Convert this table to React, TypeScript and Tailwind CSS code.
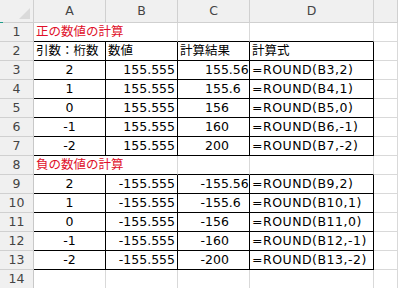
import React from 'react'

type Row = { a: string; b: string; c: string; d: string }

const positive: Row[] = [
  { a: '2', b: '155.555', c: '155.56', d: '=ROUND(B3,2)' },
  { a: '1', b: '155.555', c: '155.6', d: '=ROUND(B4,1)' },
  { a: '0', b: '155.555', c: '156', d: '=ROUND(B5,0)' },
  { a: '-1', b: '155.555', c: '160', d: '=ROUND(B6,-1)' },
  { a: '-2', b: '155.555', c: '200', d: '=ROUND(B7,-2)' },
]

const negative: Row[] = [
  { a: '2', b: '-155.555', c: '-155.56', d: '=ROUND(B9,2)' },
  { a: '1', b: '-155.555', c: '-155.6', d: '=ROUND(B10,1)' },
  { a: '0', b: '-155.555', c: '-156', d: '=ROUND(B11,0)' },
  { a: '-1', b: '-155.555', c: '-160', d: '=ROUND(B12,-1)' },
  { a: '-2', b: '-155.555', c: '-200', d: '=ROUND(B13,-2)' },
]

const grid = 'border-r border-b border-[#d9d9d9]'
const boxed = 'border-r border-b border-black'
const head = 'flex items-center justify-center bg-[#f0f0f0] border-r border-b border-[#d0d0d0] text-[#444]'

function RowNum({ n }: { n: number }) {
  return <div className={`${head} border-r-[#c8c8c8]`}>{n}</div>
}

// result column: integer part lines up, minus hangs to the left
function Result({ value }: { value: string }) {
  const neg = value.startsWith('-')
  return (
    <div className={`${boxed} flex items-center justify-end pr-[2px]`}>
      {neg && <span>-</span>}
      <span className="inline-block w-[42px] text-left">{neg ? value.slice(1) : value}</span>
    </div>
  )
}

function DataRow({ n, row }: { n: number; row: Row }) {
  return (
    <>
      <RowNum n={n} />
      <div className={`${boxed} flex items-center justify-center`}>{row.a}</div>
      <div className={`${boxed} flex items-center justify-end pr-[2px]`}>{row.b}</div>
      <Result value={row.c} />
      <div className={`${boxed} flex items-center pl-[2px] tracking-[0.5px] whitespace-nowrap`}>{row.d}</div>
      <div className={grid} />
    </>
  )
}

function TitleRow({ n, text }: { n: number; text: string }) {
  return (
    <>
      <RowNum n={n} />
      <div className="col-span-2 border-r border-b border-[#d9d9d9] border-b-black flex items-center pl-[2px] text-[#e0102a]">
        {text}
      </div>
      <div className={`${grid} border-b-black`} />
      <div className={`${grid} border-b-black`} />
      <div className={grid} />
    </>
  )
}

export default function App() {
  return (
    <div
      className="relative w-[398px] h-[288px] overflow-hidden bg-white text-[12.5px] text-black"
      style={{ fontFamily: '"DejaVu Sans", "Noto Sans CJK JP", sans-serif' }}
    >
      <div className="grid grid-cols-[34px_72px_72px_72px_124px_1fr] grid-rows-[23px_repeat(14,19px)]">
        {/* column headers */}
        <div className={`${head} relative`}>
          <svg className="absolute right-[3px] bottom-[3px]" width="11" height="11" viewBox="0 0 11 11">
            <polygon points="11,0 11,11 0,11" fill="#dadada" />
          </svg>
          <span className="absolute left-0 bottom-[-1px] w-[3px] h-[1px] bg-[#1e9e8a]" />
        </div>
        {['A', 'B', 'C', 'D'].map((c) => (
          <div key={c} className={head}>{c}</div>
        ))}
        <div className={head} />

        <TitleRow n={1} text="正の数値の計算" />

        <RowNum n={2} />
        <div className={`${boxed} flex items-center pl-[2px]`}>引数：桁数</div>
        <div className={`${boxed} flex items-center pl-[2px]`}>数値</div>
        <div className={`${boxed} flex items-center pl-[2px]`}>計算結果</div>
        <div className={`${boxed} flex items-center pl-[2px]`}>計算式</div>
        <div className={grid} />

        {positive.map((r, i) => (
          <DataRow key={r.d} n={i + 3} row={r} />
        ))}

        <TitleRow n={8} text="負の数値の計算" />

        {negative.map((r, i) => (
          <DataRow key={r.d} n={i + 9} row={r} />
        ))}

        <RowNum n={14} />
        <div className={grid} />
        <div className={grid} />
        <div className={grid} />
        <div className={grid} />
        <div className={grid} />
      </div>
    </div>
  )
}
